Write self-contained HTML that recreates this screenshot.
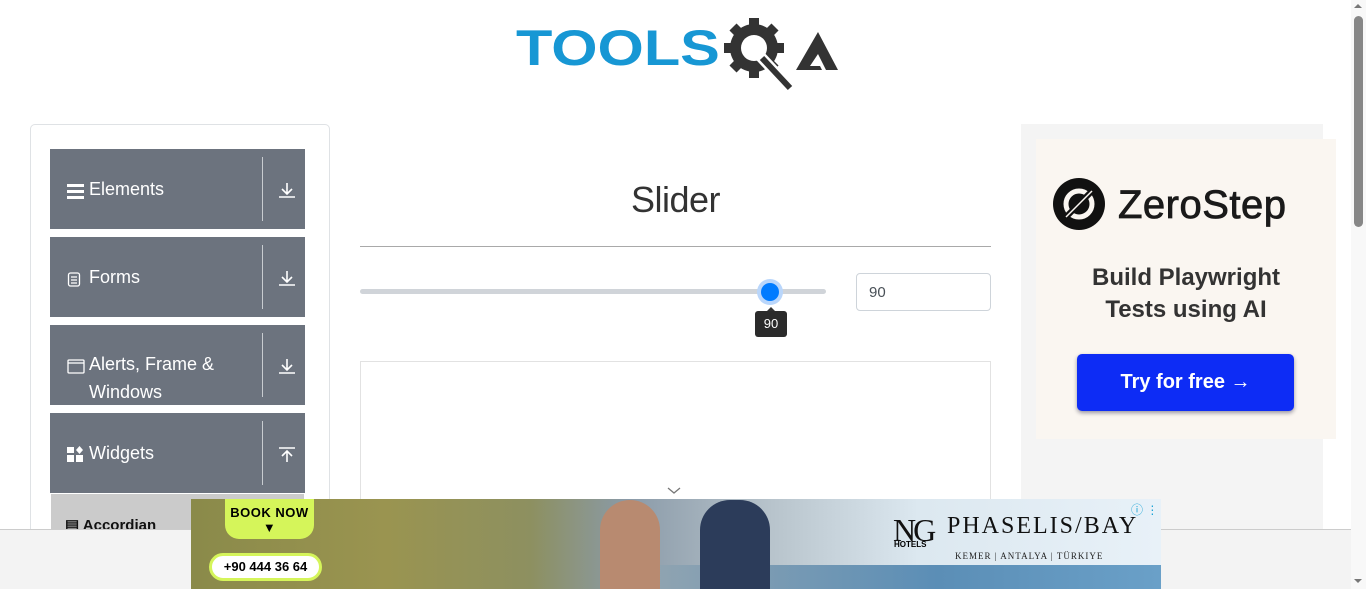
<!DOCTYPE html>
<html><head><meta charset="utf-8"><style>
*{box-sizing:border-box;margin:0;padding:0}
body{width:1366px;height:589px;overflow:hidden;background:#fff;font-family:"Liberation Sans",sans-serif;position:relative}
.abs{position:absolute}
.grp{position:absolute;left:50px;width:255px;height:80px;background:#6c737e;color:#fff;font-size:18px}
.grp .t{position:absolute;left:39px;top:26px;line-height:28px}
.grp .sep{position:absolute;left:212px;top:8px;width:1px;height:64px;background:#c8ccd0}
.grp svg.ic{position:absolute;left:17px}
.grp svg.ar{position:absolute;left:228px;top:32px}
</style></head><body>
<!-- logo -->
<div class="abs" style="left:516px;top:23px;font:bold 50px/50px 'Liberation Sans',sans-serif;color:#1797d4;letter-spacing:0px;transform:scaleX(1.19);transform-origin:left;">TOOLS</div>
<svg class="abs" style="left:722px;top:14px" width="120" height="78" viewBox="0 0 120 78">
<g fill="#333"><circle cx="32" cy="34" r="24"/>
<g stroke="#333" stroke-width="10"><line x1="32" y1="4" x2="32" y2="64"/><line x1="2" y1="34" x2="62" y2="34"/><line x1="11" y1="13" x2="53" y2="55"/><line x1="53" y1="13" x2="11" y2="55"/></g></g>
<circle cx="32" cy="34" r="13" fill="#fff"/>
<line x1="38" y1="42" x2="68" y2="74" stroke="#fff" stroke-width="11"/>
<line x1="40" y1="44" x2="68" y2="74" stroke="#333" stroke-width="6"/>
<path d="M74 56 L96 18 L116 56 L104 56 L96 40 L88 52 L98 52 L100 56 Z" fill="#333"/>
</svg>
<!-- sidebar -->
<div class="abs" style="left:30px;top:124px;width:300px;height:420px;border:1px solid #dfe2e5;border-radius:5px"></div>
<div class="grp" style="top:149px"><svg class="ic" style="top:34px" width="18" height="16"><rect y="1" width="17" height="3" fill="#fff"/><rect y="7" width="17" height="3" fill="#fff"/><rect y="13" width="17" height="3" fill="#fff"/></svg><div class="t">Elements</div><div class="sep"></div><svg class="ar" width="18" height="18" fill="none" stroke="#fff" stroke-width="1.6"><path d="M9 2v11M4 8l5 5 5-5M1 16h16"/></svg></div>
<div class="grp" style="top:237px"><svg class="ic" style="top:35px" width="14" height="16" fill="none" stroke="#fff" stroke-width="1.3"><rect x="1.5" y="1" width="11" height="13" rx="2"/><path d="M4 5h6M4 8h6M4 11h6"/></svg><div class="t">Forms</div><div class="sep"></div><svg class="ar" width="18" height="18" fill="none" stroke="#fff" stroke-width="1.6"><path d="M9 2v11M4 8l5 5 5-5M1 16h16"/></svg></div>
<div class="grp" style="top:325px;"><svg class="ic" style="top:34px" width="18" height="15" fill="none" stroke="#fff" stroke-width="1.3"><rect x="1" y="1" width="16" height="13" rx="1"/><path d="M1 4h16"/></svg><div class="t" style="top:25px">Alerts, Frame &amp;<br>Windows</div><div class="sep"></div><svg class="ar" width="18" height="18" fill="none" stroke="#fff" stroke-width="1.6"><path d="M9 2v11M4 8l5 5 5-5M1 16h16"/></svg></div>
<div class="grp" style="top:413px"><svg class="ic" style="top:33px" width="16" height="16" fill="#fff"><rect x="0" y="1" width="7" height="6"/><rect x="0" y="9" width="7" height="7"/><rect x="9" y="9" width="7" height="7"/><path d="M12.5 0l3.5 4-3.5 4-3.5-4z"/></svg><div class="t">Widgets</div><div class="sep"></div><svg class="ar" width="18" height="18" fill="none" stroke="#fff" stroke-width="1.6"><path d="M9 17V7M4 11l5-5 5 5M1 3h16"/></svg></div>
<div class="abs" style="left:51px;top:494px;width:253px;height:40px;background:#cbcbcb"></div>
<div class="abs" style="left:65px;top:516px;font:bold 15px 'Liberation Sans',sans-serif;color:#111">&#9636; Accordian</div>
<!-- main -->
<div class="abs" style="left:360px;top:179px;width:631px;text-align:center;font:36px 'Liberation Sans',sans-serif;color:#333;letter-spacing:-0.5px">Slider</div>
<div class="abs" style="left:360px;top:246px;width:631px;height:1px;background:#a9a9a9"></div>
<div class="abs" style="left:360px;top:289px;width:466px;height:5px;border-radius:3px;background:#d0d4d9"></div>
<div class="abs" style="left:757px;top:279px;width:26px;height:26px;border-radius:50%;background:#b9d6fb"></div>
<div class="abs" style="left:761px;top:283px;width:18px;height:18px;border-radius:50%;background:#007bff"></div>
<div class="abs" style="left:766px;top:307px;width:0;height:0;border-left:5px solid transparent;border-right:5px solid transparent;border-bottom:5px solid #333"></div>
<div class="abs" style="left:755px;top:311px;width:32px;height:26px;border-radius:3px;background:#2b2b2b;color:#fff;font-size:13px;line-height:26px;text-align:center">90</div>
<div class="abs" style="left:856px;top:273px;width:135px;height:38px;border:1px solid #ced4da;border-radius:4px;font-size:15px;color:#495057;padding:10px 12px">90</div>
<div class="abs" style="left:360px;top:361px;width:631px;height:180px;border:1px solid #e2e2e2"></div>
<svg class="abs" style="left:667px;top:486px" width="14" height="9" fill="none" stroke="#777" stroke-width="1.3"><path d="M1 2l6 5 6-5"/></svg>
<!-- right ad -->
<div class="abs" style="left:1021px;top:124px;width:302px;height:420px;background:#f4f4f4"></div>
<div class="abs" style="left:1036px;top:139px;width:300px;height:300px;background:#faf6f1"></div>
<svg class="abs" style="left:1052px;top:177px" width="54" height="54"><circle cx="27" cy="27" r="26" fill="#111"/><circle cx="27" cy="27" r="13" fill="none" stroke="#faf6f1" stroke-width="5"/><line x1="14" y1="40" x2="40" y2="14" stroke="#111" stroke-width="6"/><line x1="14" y1="40" x2="40" y2="14" stroke="#faf6f1" stroke-width="1.5"/></svg>
<div class="abs" style="left:1118px;top:183px;font:40px 'Liberation Sans',sans-serif;color:#1a1a1a;letter-spacing:0.5px;-webkit-text-stroke:0.8px #1a1a1a">ZeroStep</div>
<div class="abs" style="left:1036px;top:262px;width:300px;text-align:center;font:bold 24px/32px 'Liberation Sans',sans-serif;color:#333">Build Playwright<br>Tests using AI</div>
<div class="abs" style="left:1077px;top:354px;width:217px;height:57px;border-radius:5px;background:#0d2cf5;box-shadow:0 2px 4px rgba(0,0,40,.4);color:#fff;font:bold 20px 'Liberation Sans',sans-serif;text-align:center;line-height:57px">Try for free →</div>
<!-- bottom band -->
<div class="abs" style="left:0;top:529px;width:1351px;height:60px;background:#f3f3f3;border-top:1px solid #ccc"></div>
<div class="abs" style="left:191px;top:499px;width:970px;height:90px;background:linear-gradient(90deg,#8a8a4a 0%,#9a9450 20%,#8d9060 35%,#8a9aa8 45%,#b8c4cc 60%,#dce8f0 75%,#e8f1f8 100%)"></div>
<div class="abs" style="left:600px;top:565px;width:561px;height:24px;background:linear-gradient(90deg,#9aa8b0,#5b8eb6 60%,#6aa0c8)"></div>
<div class="abs" style="left:600px;top:500px;width:60px;height:89px;border-radius:30px 30px 0 0;background:#b88a70"></div>
<div class="abs" style="left:700px;top:500px;width:70px;height:89px;border-radius:30px 30px 0 0;background:#2c3c5a"></div>
<div class="abs" style="left:225px;top:499px;width:89px;height:40px;border-radius:0 0 14px 14px;background:#d5f55a;font:900 13px 'Liberation Sans',sans-serif;text-align:center;padding-top:6px;letter-spacing:.5px">BOOK NOW<br>▼</div>
<div class="abs" style="left:209px;top:553px;width:113px;height:28px;border-radius:14px;background:#fff;border:3px solid #d5f55a;font:bold 13px/22px 'Liberation Sans',sans-serif;text-align:center">+90 444 36 64</div>
<div class="abs" style="left:893px;top:512px;font:32px 'Liberation Serif',serif;color:#111;letter-spacing:-3px">NG</div>
<div class="abs" style="left:894px;top:540px;font:bold 8px 'Liberation Sans',sans-serif">HOTELS</div>
<div class="abs" style="left:947px;top:513px;font:24px 'Liberation Serif',serif;color:#111;letter-spacing:2px">PHASELIS/BAY</div>
<div class="abs" style="left:955px;top:551px;font:9px 'Liberation Serif',serif;color:#222;letter-spacing:1px">KEMER | ANTALYA | TÜRKIYE</div>
<div class="abs" style="left:1131px;top:501px;font:12px sans-serif;color:#19a3d6">ⓘ ⋮</div>
<!-- scrollbar -->
<div class="abs" style="left:1351px;top:0;width:15px;height:589px;background:#f8f8f8"></div>
<div class="abs" style="left:1354px;top:16px;width:9px;height:211px;border-radius:5px;background:#878787"></div>
<div class="abs" style="left:1354px;top:4px;border-left:4px solid transparent;border-right:4px solid transparent;border-bottom:4px solid #777"></div>
<div class="abs" style="left:1354px;top:579px;border-left:4px solid transparent;border-right:4px solid transparent;border-top:4px solid #777"></div>
</body></html>
